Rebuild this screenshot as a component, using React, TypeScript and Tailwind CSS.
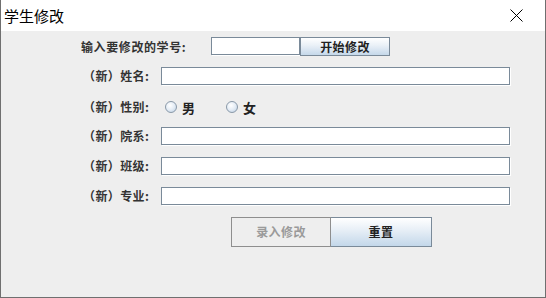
import React from "react";

const font = { fontFamily: '"Noto Sans CJK SC", "Noto Sans", sans-serif' };

function Field({ w }: { w: string }) {
  return (
    <div
      className={`${w} h-[18px] bg-white border border-[#7a8a99] shadow-[1px_1px_0_#ffffff]`}
    />
  );
}

function Radio({ label }: { label: string }) {
  return (
    <div className="flex items-center gap-[5px]">
      <div className="w-[12px] h-[12px] rounded-full border border-[#8a99a8] bg-[radial-gradient(circle_at_40%_35%,#ffffff_0%,#e4ecf5_50%,#b8cde2_100%)]" />
      <span className="text-[13px] font-bold text-[#222] leading-none">{label}</span>
    </div>
  );
}

function Row({ label, ml }: { label: string; ml: string }) {
  return (
    <div className="flex items-center h-[18px]">
      <div className={`${ml} w-[78px] text-[12px] font-bold text-[#333] leading-none whitespace-nowrap tracking-[0.4px]`}>
        {label}
      </div>
      <Field w="w-[349px]" />
    </div>
  );
}

export default function App() {
  return (
    <div
      style={font}
      className="w-[546px] h-[298px] flex flex-col bg-[#eeeeee] border border-[#6f6f6f] border-t-0 overflow-hidden"
    >
      <div className="h-[31px] bg-white flex items-center justify-between pl-[3px] pr-[22px] shrink-0">
        <span className="text-[15px] text-black leading-none">学生修改</span>
        <svg width="13" height="13" viewBox="0 0 13 13">
          <path d="M0.5 0.5 L12.5 12.5 M12.5 0.5 L0.5 12.5" stroke="#000" strokeWidth="1" />
        </svg>
      </div>
      <div className="flex flex-col gap-[12px] pt-[6px]">
        <div className="flex items-start h-[18px]">
          <div className="ml-[80px] w-[130px] h-[19px] flex items-center text-[12px] font-bold text-[#333] leading-none whitespace-nowrap tracking-[0.6px]">
            输入要修改的学号:
          </div>
          <Field w="w-[89px]" />
          <button className="w-[90px] h-[19px] border border-[#7a8a99] bg-[linear-gradient(#ffffff,#e9f0f7_45%,#c5d8ea)] text-[12px] font-bold text-[#222] leading-none flex items-center justify-center tracking-[0.4px]">
            开始修改
          </button>
        </div>
        <Row label="（新）姓名:" ml="ml-[82px]" />
        <div className="flex items-center h-[18px] pt-[2px]">
          <div className="ml-[82px] w-[82px] text-[12px] font-bold text-[#333] leading-none whitespace-nowrap tracking-[0.4px]">
            （新）性别:
          </div>
          <Radio label="男" />
          <div className="w-[31px]" />
          <Radio label="女" />
        </div>
        <Row label="（新）院系:" ml="ml-[82px]" />
        <Row label="（新）班级:" ml="ml-[82px]" />
        <Row label="（新）专业:" ml="ml-[82px]" />
        <div className="flex ml-[230px]">
          <button className="w-[100px] h-[30px] border border-[#8e8e8e] bg-[#eeeeee] text-[12px] font-bold text-[#9a9a9a] leading-none flex items-center justify-center tracking-[0.4px]">
            录入修改
          </button>
          <button className="w-[101px] h-[30px] border border-[#7a8a99] border-l-0 bg-[linear-gradient(#ffffff,#e9f0f7_40%,#c3d7ea)] text-[12px] font-bold text-[#222] leading-none flex items-center justify-center tracking-[0.4px]">
            重置
          </button>
        </div>
      </div>
    </div>
  );
}
